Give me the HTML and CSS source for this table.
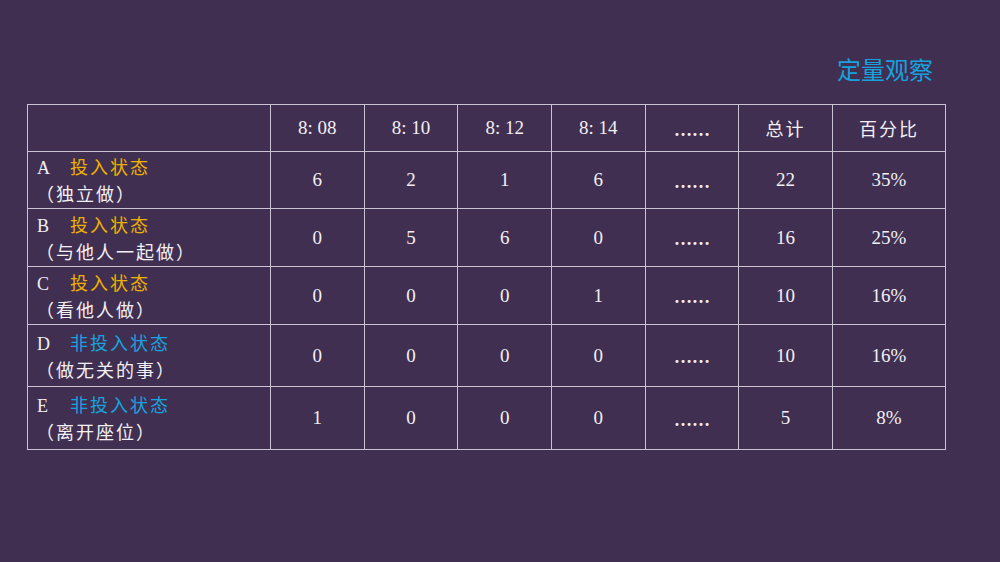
FILE: index.html
```html
<!DOCTYPE html>
<html lang="zh">
<head>
<meta charset="utf-8">
<title>定量观察</title>
<link rel="stylesheet" href="styles.css">
</head>
<body>
<div class="slide">
  <div class="title-row"><h1 class="title">定量观察</h1></div>
  <table class="grid">
    <colgroup>
      <col class="c-label"><col class="c-t"><col class="c-t"><col class="c-t"><col class="c-t"><col class="c-t"><col class="c-t"><col class="c-pct">
    </colgroup>
    <tr class="r-head">
      <td></td>
      <td class="num">8: 08</td>
      <td class="num">8: 10</td>
      <td class="num">8: 12</td>
      <td class="num">8: 14</td>
      <td class="num dots">……</td>
      <td class="cjk">总计</td>
      <td class="cjk">百分比</td>
    </tr>
    <tr class="r1">
      <td class="label"><div class="l1"><span class="letter">A</span><span class="state yellow">投入状态</span></div><div class="l2">（独立做）</div></td>
      <td class="num">6</td><td class="num">2</td><td class="num">1</td><td class="num">6</td><td class="num dots">……</td><td class="num">22</td><td class="num">35%</td>
    </tr>
    <tr class="r2">
      <td class="label"><div class="l1"><span class="letter">B</span><span class="state yellow">投入状态</span></div><div class="l2">（与他人一起做）</div></td>
      <td class="num">0</td><td class="num">5</td><td class="num">6</td><td class="num">0</td><td class="num dots">……</td><td class="num">16</td><td class="num">25%</td>
    </tr>
    <tr class="r3">
      <td class="label"><div class="l1"><span class="letter">C</span><span class="state yellow">投入状态</span></div><div class="l2">（看他人做）</div></td>
      <td class="num">0</td><td class="num">0</td><td class="num">0</td><td class="num">1</td><td class="num dots">……</td><td class="num">10</td><td class="num">16%</td>
    </tr>
    <tr class="r4">
      <td class="label"><div class="l1"><span class="letter">D</span><span class="state blue">非投入状态</span></div><div class="l2">（做无关的事）</div></td>
      <td class="num">0</td><td class="num">0</td><td class="num">0</td><td class="num">0</td><td class="num dots">……</td><td class="num">10</td><td class="num">16%</td>
    </tr>
    <tr class="r5">
      <td class="label"><div class="l1"><span class="letter">E</span><span class="state blue">非投入状态</span></div><div class="l2">（离开座位）</div></td>
      <td class="num">1</td><td class="num">0</td><td class="num">0</td><td class="num">0</td><td class="num dots">……</td><td class="num">5</td><td class="num">8%</td>
    </tr>
  </table>
</div>
</body>
</html>
```
FILE: styles.css
```css
html, body {
  margin: 0;
  padding: 0;
}
body {
  width: 1000px;
  height: 562px;
  background: #402f50;
  overflow: hidden;
  font-family: "Liberation Serif", "Noto Sans CJK SC", serif;
  color: #f2eff5;
}
.slide {
  padding: 54px 55px 0 27px;
}
.title-row {
  display: flex;
  justify-content: flex-end;
  padding-right: 12px;
  margin-bottom: 20px;
}
.title {
  margin: 0;
  font-family: "Noto Sans CJK SC", sans-serif;
  font-weight: 400;
  font-size: 24px;
  line-height: 30px;
  color: #16a2de;
}
.grid {
  border-collapse: collapse;
  table-layout: fixed;
  width: 918px;
}
.c-label { width: 243px; }
.c-t { width: 93.67px; }
.c-pct { width: 113px; }
.grid td {
  border: 1px solid #cbc3d4;
  padding: 0;
  text-align: center;
  vertical-align: middle;
}
.r-head { height: 47px; }
.r1 { height: 57px; }
.r2 { height: 58px; }
.r3 { height: 58px; }
.r4 { height: 62px; }
.r5 { height: 63px; }
.num {
  font-family: "Liberation Serif", serif;
  font-size: 19px;
  padding-top: 2px;
}
.grid td.dots {
  font-weight: 700;
  font-size: 18px;
  padding-top: 4px;
}
.cjk {
  font-family: "Noto Sans CJK SC", sans-serif;
  font-size: 18px;
  letter-spacing: 2px;
}
.grid td.label {
  text-align: left;
  padding-left: 8px;
}
.l1, .l2 {
  font-size: 18px;
  line-height: 25px;
  white-space: nowrap;
}
.letter {
  display: inline-block;
  width: 33px;
  font-family: "Liberation Serif", serif;
  font-weight: 400;
  font-size: 18px;
  padding-left: 1px;
}
.state {
  font-family: "Noto Sans CJK SC", sans-serif;
  letter-spacing: 2px;
}
.l2 {
  font-family: "Noto Sans CJK SC", sans-serif;
  letter-spacing: 2px;
}
.yellow { color: #eeb100; }
.blue { color: #17a3df; }
```
